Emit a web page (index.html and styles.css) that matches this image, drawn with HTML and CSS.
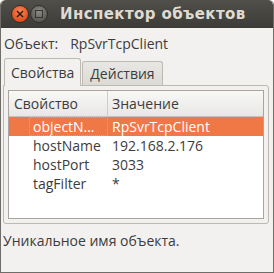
FILE: index.html
```html
<!DOCTYPE html>
<html lang="ru">
<head>
    <meta charset="UTF-8">
    <title>Инспектор объектов</title>
    <link rel="stylesheet" href="styles.css">
</head>
<body>
    <div class="window">
        <header class="titlebar">
            <span class="btn btn-close">
                <svg width="8" height="8" viewBox="0 0 8 8"><path d="M1 1 L7 7 M7 1 L1 7" stroke="#3a1a0c" stroke-width="1.6"/></svg>
            </span>
            <span class="btn btn-min"><i></i></span>
            <span class="title">Инспектор объектов</span>
        </header>

        <div class="content">
            <div class="object-row">
                <span>Объект:</span>
                <span class="object-name">RpSvrTcpClient</span>
            </div>

            <div class="tabs">
                <div class="tab active">Свойства</div>
                <div class="tab">Действия</div>
            </div>

            <div class="panel">
                <div class="tree">
                    <div class="tree-head">
                        <div class="col-name">Свойство</div>
                        <div class="col-value">Значение</div>
                    </div>
                    <div class="row selected">
                        <div class="col-name"><span class="focus">objectN…</span></div>
                        <div class="col-value">RpSvrTcpClient</div>
                    </div>
                    <div class="row">
                        <div class="col-name">hostName</div>
                        <div class="col-value">192.168.2.176</div>
                    </div>
                    <div class="row">
                        <div class="col-name">hostPort</div>
                        <div class="col-value">3033</div>
                    </div>
                    <div class="row">
                        <div class="col-name">tagFilter</div>
                        <div class="col-value">*</div>
                    </div>
                </div>
            </div>

            <div class="status">Уникальное имя объекта.</div>
        </div>
    </div>
</body>
</html>
```

FILE: styles.css
```css
html, body {
    margin: 0;
    padding: 0;
    background: #ffffff;
}

body {
    font-family: "Open Sans", "DejaVu Sans", sans-serif;
    font-size: 14px;
    color: #3c3c3c;
}

.window {
    width: 274px;
    height: 273px;
    box-sizing: border-box;
    display: flex;
    flex-direction: column;
    background-color: #f2f1f0;
    border-radius: 5px 5px 0 0;
    border: 1px solid #6f6d67;
    border-top: none;
    overflow: hidden;
}

/* Title bar */
.titlebar {
    height: 28px;
    flex: none;
    display: flex;
    align-items: center;
    padding-left: 10px;
    background: linear-gradient(#504f4a, #3c3b37);
    border-radius: 5px 5px 0 0;
}

.btn {
    width: 18px;
    height: 18px;
    border-radius: 50%;
    display: flex;
    align-items: center;
    justify-content: center;
    box-sizing: border-box;
}

.btn-close {
    background: radial-gradient(circle at 50% 35%, #f7875a, #e4501e 70%);
    border: 1px solid #2f2e2a;
}

.btn-min {
    margin-left: 1px;
    background: radial-gradient(circle at 50% 35%, #8c8a83, #5c5b56 70%);
    border: 1px solid #2f2e2a;
}

.btn-min i {
    width: 6px;
    height: 6px;
    border: 1px solid #36352f;
}

.title {
    margin-left: 12px;
    font-family: "DejaVu Sans", sans-serif;
    font-weight: bold;
    font-size: 15px;
    letter-spacing: 0.4px;
    color: #dfdbd2;
}

/* Content */
.content {
    flex: 1;
    display: flex;
    flex-direction: column;
    padding: 0 4px 0 2px;
}

.object-row {
    height: 26px;
    display: flex;
    align-items: center;
    padding: 4px 0 0 1px;
    box-sizing: border-box;
}

.object-name {
    margin-left: 12px;
}

.tabs {
    display: flex;
    align-items: flex-end;
    height: 27px;
    margin-top: 4px;
    padding-left: 1px;
}

.tab {
    height: 23px;
    padding: 0 7px;
    display: flex;
    align-items: center;
    border: 1px solid #bdbab4;
    border-bottom: none;
    border-radius: 3px 3px 0 0;
    background: linear-gradient(#e9e7e4, #dcdad5);
    margin-right: 1px;
}

.tab.active {
    height: 27px;
    padding: 0 6px;
    background: #f2f1f0;
    position: relative;
    top: 1px;
}

.panel {
    height: 139px;
    border: 1px solid #bdbab4;
    border-radius: 0 3px 3px 3px;
    padding: 4px;
    box-sizing: border-box;
}

.tree {
    height: 100%;
    background: #ffffff;
    border: 1px solid #a8a59f;
    box-sizing: border-box;
}

.tree-head {
    display: flex;
    height: 26px;
    background: linear-gradient(#f8f8f7, #e8e7e5);
    border-bottom: 1px solid #c5c2bc;
    box-sizing: border-box;
}

.tree-head .col-name {
    padding-left: 5px;
    border-right: 1px solid #d0cdc8;
}

.col-name {
    width: 99px;
    flex: none;
    display: flex;
    align-items: center;
    box-sizing: border-box;
    white-space: nowrap;
}

.col-value {
    flex: 1;
    display: flex;
    align-items: center;
    padding-left: 4px;
    white-space: nowrap;
}

.row {
    display: flex;
    height: 19px;
}

.row .col-name {
    padding-left: 24px;
}

.row.selected {
    background: #f07746;
    color: #ffffff;
}

.row.selected .col-name {
    padding-left: 20px;
}

.focus {
    height: 19px;
    padding-left: 4px;
    flex: 1;
    display: flex;
    align-items: center;
    outline: 1px dotted #9fb3c9;
    outline-offset: -1px;
}

.status {
    padding: 7px 0 0 0;
}
```
